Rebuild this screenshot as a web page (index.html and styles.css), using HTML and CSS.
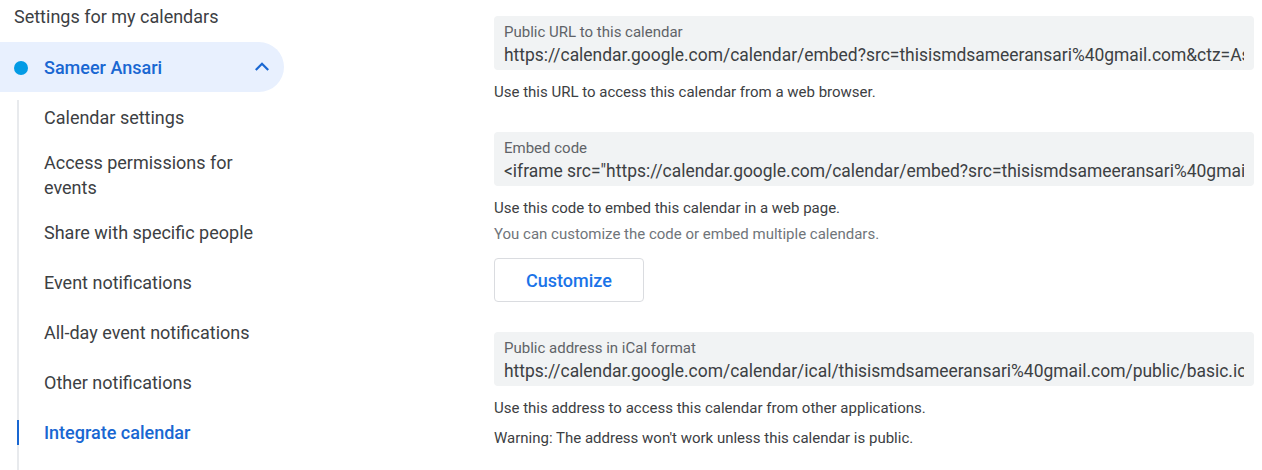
FILE: index.html
```
<!DOCTYPE html>
<html>
<head>
<meta charset="utf-8">
<link rel="stylesheet" href="styles.css">
</head>
<body>
<div class="page">
  <aside class="sidebar">
    <div class="heading">Settings for my calendars</div>
    <div class="calendar-pill">
      <span class="dot"></span>
      <span class="cal-name">Sameer Ansari</span>
      <svg class="chevron" width="24" height="24" viewBox="0 0 24 24"><path d="M5.8 15 12 8.8l6.2 6.2" fill="none" stroke="#1967d2" stroke-width="2.2"/></svg>
    </div>
    <ul class="nav">
      <li class="nav-item first">Calendar settings</li>
      <li class="nav-item second">Access permissions for<br>events</li>
      <li class="nav-item">Share with specific people</li>
      <li class="nav-item">Event notifications</li>
      <li class="nav-item">All-day event notifications</li>
      <li class="nav-item">Other notifications</li>
      <li class="nav-item active"><span class="nav-text">Integrate calendar</span></li>
    </ul>
  </aside>
  <main class="main">
    <section class="block">
      <div class="field">
        <div class="field-label">Public URL to this calendar</div>
        <div class="field-value">https://calendar.google.com/calendar/embed?src=thisismdsameeransari%40gmail.com&amp;ctz=Asia%2FKolkata</div>
      </div>
      <p class="help">Use this URL to access this calendar from a web browser.</p>
    </section>
    <section class="block">
      <div class="field">
        <div class="field-label">Embed code</div>
        <div class="field-value">&lt;iframe src="https://calendar.google.com/calendar/embed?src=thisismdsameeransari%40gmail.com&amp;ctz=Asia%2FKolkata" style="border: 0"&gt;&lt;/iframe&gt;</div>
      </div>
      <p class="help">Use this code to embed this calendar in a web page.</p>
      <p class="help muted">You can customize the code or embed multiple calendars.</p>
      <button class="btn">Customize</button>
    </section>
    <section class="block">
      <div class="field">
        <div class="field-label">Public address in iCal format</div>
        <div class="field-value">https://calendar.google.com/calendar/ical/thisismdsameeransari%40gmail.com/public/basic.ics</div>
      </div>
      <p class="help">Use this address to access this calendar from other applications.</p>
      <p class="help warn">Warning: The address won't work unless this calendar is public.</p>
    </section>
  </main>
</div>
</body>
</html>
```
FILE: styles.css
```
* { box-sizing: border-box; }
html, body { margin: 0; padding: 0; background: #fff; }
body {
  font-family: Roboto, "Liberation Sans", Arial, sans-serif;
  color: #3c4043;
  height: 470px;
  overflow: hidden;
}
.page {
  display: flex;
  gap: 210px;
}
.sidebar {
  width: 284px;
  flex: none;
}
.heading {
  font-size: 18px;
  line-height: 24px;
  padding: 5px 0 0 14px;
  height: 42px;
  color: #3c4043;
}
.calendar-pill {
  height: 50px;
  background: #e8f0fe;
  border-radius: 0 25px 25px 0;
  display: flex;
  align-items: center;
  padding-left: 14px;
  padding-right: 10px;
}
.dot {
  width: 14px;
  height: 14px;
  border-radius: 50%;
  background: #039be5;
  flex: none;
  margin-top: 1px;
}
.cal-name {
  margin-left: 16px;
  font-size: 18px;
  font-weight: 500;
  color: #1967d2;
  flex: 1;
}
.chevron { flex: none; }
.nav {
  list-style: none;
  margin: 8px 0 0 17px;
  padding: 0 0 30px 0;
  border-left: 2px solid #e8eaed;
}
.nav-item {
  padding: 12.5px 0 12.5px 25px;
  font-size: 18px;
  line-height: 25px;
  color: #3c4043;
  position: relative;
}
.nav-item.first { padding-top: 4.5px; padding-bottom: 7.5px; }
.nav-item.second { padding-bottom: 7.5px; }
.nav-item.active { color: #1967d2; font-weight: 500; }
.nav-item.active::before {
  content: "";
  position: absolute;
  left: -2px;
  top: 12.5px;
  width: 2px;
  height: 25px;
  background: #1967d2;
}
.main {
  width: 760px;
  flex: none;
  padding-top: 16px;
}
.block { margin-bottom: 30px; }
.field {
  background: #f1f3f4;
  border-radius: 4px;
  padding: 6px 10px 2px 10px;
  height: 54px;
  overflow: hidden;
}
.field-label {
  font-size: 15px;
  line-height: 20px;
  color: #5f6368;
}
.field-value {
  font-size: 17.45px;
  line-height: 26px;
  color: #3c4043;
  white-space: nowrap;
  overflow: hidden;
}
.help {
  margin: 12px 0 0 0;
  font-size: 15px;
  line-height: 20px;
  color: #3c4043;
}
.help.muted { margin-top: 6px; color: #70757a; }
.help.warn { margin-top: 10px; }
.btn {
  display: block;
  margin-top: 14px;
  width: 150px;
  height: 44px;
  border: 1px solid #dadce0;
  border-radius: 4px;
  background: #fff;
  font-family: Roboto, "Liberation Sans", Arial, sans-serif;
  font-size: 18px;
  font-weight: 500;
  color: #1a73e8;
  padding: 0;
}
```
